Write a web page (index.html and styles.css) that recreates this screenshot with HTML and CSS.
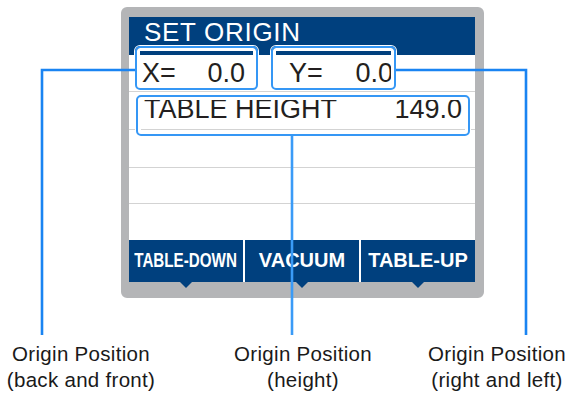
FILE: index.html
```html
<!DOCTYPE html>
<html>
<head>
<meta charset="utf-8">
<link rel="stylesheet" href="styles.css">
</head>
<body>
<div class="page">
  <div class="panel">
    <div class="screen">
      <div class="header">SET ORIGIN</div>
      <div class="row row-xy">
        <div class="cell cell-x"><span>X=</span><span>0.0</span></div>
        <div class="cell cell-y"><span>Y=</span><span>0.0</span></div>
      </div>
      <div class="row row-height"><span>TABLE HEIGHT</span><span>149.0</span></div>
      <div class="row row-empty"></div>
      <div class="row row-empty short"></div>
      <div class="row row-blank"></div>
      <div class="buttons">
        <div class="btn"><span class="squeeze">TABLE-DOWN</span></div>
        <div class="btn"><span>VACUUM</span></div>
        <div class="btn"><span>TABLE-UP</span></div>
      </div>
      <div class="hl hl-x"></div>
      <div class="hl hl-y"></div>
      <div class="hl hl-h"></div>
    </div>
  </div>
  <div class="labels">
    <div class="label label-1">Origin Position<br>(back and front)</div>
    <div class="label label-2">Origin Position<br>(height)</div>
    <div class="label label-3">Origin Position<br>(right and left)</div>
  </div>
  <svg class="callouts" width="567" height="393" viewBox="0 0 567 393">
    <polyline points="135,70 42,70 42,335" fill="none" stroke="#1a84f2" stroke-width="2.6"/>
    <polyline points="396,70 526,70 526,335" fill="none" stroke="#1a84f2" stroke-width="2.6"/>
    <line x1="292" y1="136" x2="292" y2="335" stroke="#3a9bf7" stroke-width="2.6"/>
  </svg>
</div>
</body>
</html>
```
FILE: styles.css
```css
html, body {
  margin: 0;
  padding: 0;
  background: #ffffff;
}

.page {
  position: relative;
  width: 567px;
  height: 393px;
  overflow: hidden;
  font-family: "Liberation Sans", Arial, sans-serif;
}

.panel {
  box-sizing: border-box;
  width: 363px;
  height: 291px;
  margin-left: 121px;
  margin-top: 7px;
  border-style: solid;
  border-color: #b4b5b7;
  border-width: 10px 9px 16px 8px;
  border-radius: 6px;
  display: block;
}

.screen {
  position: relative;
  width: 346px;
  height: 265px;
  background: #ffffff;
  display: flex;
  flex-direction: column;
}

.header {
  height: 38px;
  flex: none;
  background: #00407e;
  color: #ffffff;
  font-size: 26px;
  letter-spacing: 0.7px;
  line-height: 30px;
  padding-left: 15px;
  box-sizing: border-box;
}

.row {
  flex: none;
  box-sizing: border-box;
  border-bottom: 1px solid #d3d3d3;
  color: #231f20;
  font-size: 27px;
}

.row-xy {
  height: 37px;
  line-height: 36px;
  display: flex;
}

.cell {
  display: flex;
  justify-content: space-between;
}

.cell-x {
  width: 116px;
  padding-left: 13px;
  box-sizing: border-box;
}

.cell-y {
  width: 104px;
  margin-left: 44px;
}

.row-height {
  height: 38px;
  line-height: 34px;
  display: flex;
  justify-content: space-between;
  padding-left: 15px;
  padding-right: 13px;
}

.row-empty {
  height: 38px;
}

.row-empty.short {
  height: 36px;
}

.row-blank {
  height: 36px;
  border-bottom: none;
}

.buttons {
  flex: none;
  height: 42px;
  display: flex;
  gap: 2px;
  background: #ffffff;
}

.btn {
  position: relative;
  flex: 1 1 0;
  min-width: 0;
  background: #00407e;
  color: #ffffff;
  font-weight: bold;
  font-size: 20px;
  line-height: 40px;
  display: flex;
  justify-content: center;
}

.btn span {
  display: inline-block;
  white-space: nowrap;
  flex: none;
}

.btn .squeeze {
  transform: scaleX(0.76);
}

.btn::after {
  content: "";
  position: absolute;
  top: 100%;
  left: 50%;
  margin-left: -6px;
  border-left: 6px solid transparent;
  border-right: 6px solid transparent;
  border-top: 6px solid #00407e;
}

.hl {
  position: absolute;
  box-sizing: border-box;
  border: 2px solid #3597f5;
  border-radius: 5px;
  box-shadow: 0 0 0 1px #ffffff, inset 0 0 0 3px #ffffff;
}

.hl-x {
  left: 6px;
  top: 29px;
  width: 123px;
  height: 44px;
}

.hl-y {
  left: 142px;
  top: 29px;
  width: 125px;
  height: 44px;
}

.hl-h {
  left: 7px;
  top: 78px;
  width: 334px;
  height: 41px;
}

.labels {
  display: flex;
  margin-top: 43px;
}

.label {
  flex: none;
  text-align: center;
  font-size: 20.5px;
  letter-spacing: 0.3px;
  line-height: 26px;
  color: #1a1a1a;
  white-space: nowrap;
}

.label-1 {
  width: 162px;
}

.label-2 {
  width: 160px;
  margin-left: 61px;
}

.label-3 {
  width: 140px;
  margin-left: 44px;
}

.callouts {
  position: absolute;
  left: 0;
  top: 0;
  pointer-events: none;
}
```
